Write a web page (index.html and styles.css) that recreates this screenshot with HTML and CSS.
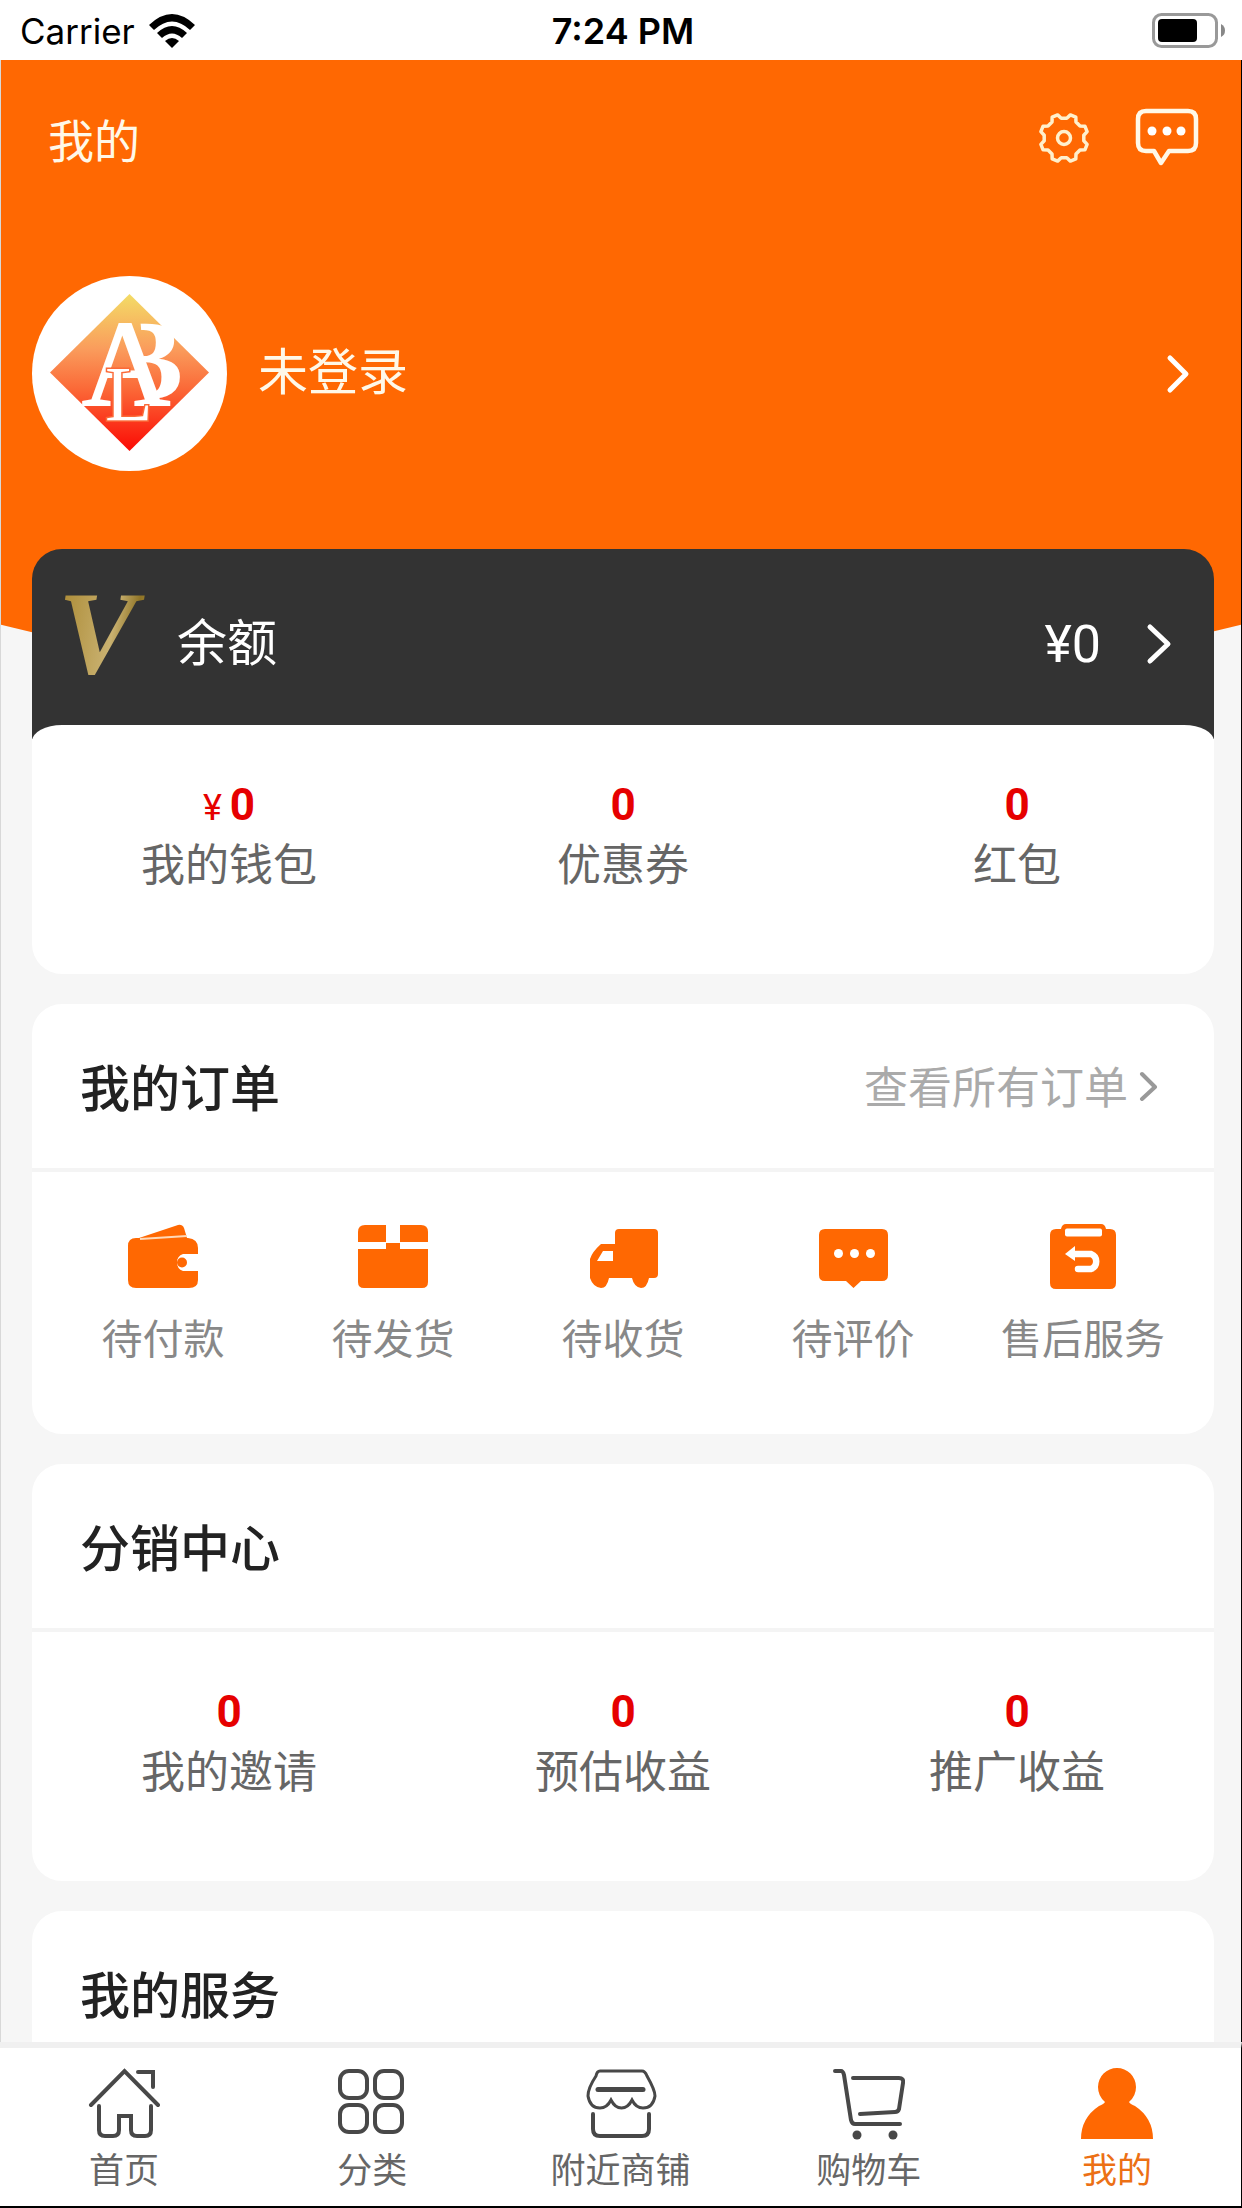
FILE: index.html
```html
<!DOCTYPE html>
<html lang="zh-CN">
<head>
    <meta charset="UTF-8">
    <meta name="viewport" content="width=device-width, initial-scale=1.0">
    <title>我的</title>
    <link rel="stylesheet" href="styles.css">
</head>
<body>
    <div class="status">
        <div class="carrier">
            <span>Carrier</span>
            <svg width="46" height="34" viewBox="0 0 46 34">
                <path d="M0 11Q23-11 46 11L41 16Q23-1 5 16Z"/>
                <path d="M8 19Q23 5 38 19L33 24Q23 15 13 24Z"/>
                <path d="M16 27Q23 21 30 27L23 34Z"/>
            </svg>
        </div>
        <div class="time">7:24 PM</div>
        <div class="battery">
            <svg width="74" height="36" viewBox="0 0 74 36">
                <rect x="1.5" y="1.5" width="63" height="32" rx="8" fill="none" stroke="#999" stroke-width="3"/>
                <rect x="6" y="6" width="39" height="23" rx="4"/>
                <path d="M69 11q4 2 4 6.500t-4 6.500z" fill="#888"/>
            </svg>
        </div>
    </div>

    <main class="page">
        <header class="topbar">
            <h1>我的</h1>
            <button class="icon-btn" aria-label="设置">
                <svg width="64" height="64" viewBox="-32 -32 64 64" fill="none" stroke="#fff0cc" stroke-width="3.500" stroke-linejoin="round">
                    <path d="M19.800 2.800L23.100 6.400L20.900 11.800L16 12L12 16L11.800 20.900L6.400 23.100L2.800 19.800H-2.800L-6.400 23.100L-11.800 20.900L-12 16L-16 12L-20.900 11.800L-23.100 6.400L-19.800 2.800V-2.800L-23.100-6.400L-20.900-11.800L-16-12L-12-16L-11.800-20.900L-6.400-23.100L-2.800-19.800H2.800L6.400-23.100L11.800-20.900L12-16L16-12L20.900-11.800L23.100-6.400L19.800-2.800Z"/>
                    <circle r="6.500"/>
                </svg>
            </button>
            <button class="icon-btn" aria-label="消息">
                <svg width="64" height="64" viewBox="0 0 64 64" fill="none" stroke="#fff8e8" stroke-width="4.500" stroke-linejoin="round">
                    <path d="M11 5H53Q61 5 61 13V37Q61 45 53 45H34L26 57L19 45H11Q3 45 3 37V13Q3 5 11 5Z"/>
                    <g fill="#fff" stroke="none">
                        <circle cx="17" cy="25" r="4.500"/>
                        <circle cx="32" cy="25" r="4.500"/>
                        <circle cx="46" cy="25" r="4.500"/>
                    </g>
                </svg>
            </button>
        </header>

        <a href="#" class="profile">
            <svg class="avatar" width="195" height="195" viewBox="0 0 195 195">
                <defs>
                    <linearGradient id="gem" x1="0" y1="0" x2="0" y2="1">
                        <stop offset="0" stop-color="#f3dc66"/>
                        <stop offset=".35" stop-color="#fa9c5c"/>
                        <stop offset=".6" stop-color="#fb6a38"/>
                        <stop offset="1" stop-color="#fb0a04"/>
                    </linearGradient>
                    <clipPath id="bowls"><path d="M107 30H170V140H117Z"/></clipPath>
                </defs>
                <circle cx="97.500" cy="97.500" r="97.500" fill="#fff"/>
                <path d="M97.500 18L177 96.500L97.500 175L18 96.500Z" fill="url(#gem)"/>
                <text class="mark mark-b" x="75" y="123" font-size="114" clip-path="url(#bowls)">B</text>
                <text class="mark mark-a" x="50" y="129" font-size="122">A</text>
                <text class="mark mark-l" x="73" y="144" font-size="78">L</text>
            </svg>
            <span class="name">未登录</span>
            <svg width="28" height="44" viewBox="0 0 28 44" class="arrow"><path d="M6 6L22 22L6 38"/></svg>
        </a>

        <a href="#" class="balance">
            <span class="vip">V</span>
            <span class="balance-label">余额</span>
            <span class="money">¥0</span>
            <svg width="28" height="44" viewBox="0 0 28 44" class="arrow"><path d="M5 5L23 22L5 39"/></svg>
        </a>

        <section class="card wallet">
            <ul class="stats">
                <li><b><small>¥</small>0</b><span>我的钱包</span></li>
                <li><b>0</b><span>优惠券</span></li>
                <li><b>0</b><span>红包</span></li>
            </ul>
        </section>

        <section class="card">
            <div class="card-head">
                <h2>我的订单</h2>
                <a href="#" class="more">查看所有订单
                    <svg width="22" height="32" viewBox="0 0 22 32" class="arrow"><path d="M4 5L17 18L4 30"/></svg>
                </a>
            </div>
            <nav class="orders">
                <a href="#">
                    <svg viewBox="0 0 72 72">
                        <path d="M12 18L51 5Q55 4 57 8L60 18Z"/>
                        <path d="M9 18H61Q71 19 71 28V34H56A9 9 0 0 0 56 51H71V60Q71 68 62 68H9Q1 68 1 60V26Q1 18 9 18Z"/>
                        <path d="M13 19L60 16" stroke="#ffd9b8" stroke-width="2"/>
                        <circle cx="55" cy="42.500" r="5"/>
                    </svg>
                    待付款
                </a>
                <a href="#">
                    <svg viewBox="0 0 72 72">
                        <path d="M8 5H29V22H1V12Q1 5 8 5Z"/>
                        <path d="M43 5H64Q71 5 71 12V22H43Z"/>
                        <path d="M1 29H29V23H43V29H71V62Q71 68 65 68H7Q1 68 1 62Z"/>
                    </svg>
                    待发货
                </a>
                <a href="#">
                    <svg viewBox="0 0 72 72">
                        <path fill-rule="evenodd" d="M32 9H67Q71 9 71 13V54Q71 58 67 58H62Q60 68 54 68Q47 67 45 58H22Q20 68 14 68Q6 67 3 58V39Q5 32 14 24H28V13Q28 9 32 9ZM16 31L10 41H26V31Z"/>
                    </svg>
                    待收货
                </a>
                <a href="#">
                    <svg viewBox="0 0 72 72">
                        <path d="M8 9H65Q71 9 71 15V55Q71 61 65 61H44L36.500 68L29 61H8Q2 61 2 55V15Q2 9 8 9Z"/>
                        <g fill="#fff">
                            <circle cx="21.500" cy="33.500" r="4.500"/>
                            <circle cx="37.500" cy="33.500" r="4.500"/>
                            <circle cx="53.500" cy="33.500" r="4.500"/>
                        </g>
                    </svg>
                    待评价
                </a>
                <a href="#">
                    <svg viewBox="0 0 72 72">
                        <path d="M9 9H14Q15 4 19 4H54Q58 4 59 9H63Q69 9 69 15V63Q69 69 63 69H9Q3 69 3 63V15Q3 9 9 9Z"/>
                        <rect x="18" y="8.500" width="37" height="8" rx="2" fill="#fff"/>
                        <path d="M27 34H44A8 8 0 0 1 44 49H31" fill="none" stroke="#fff" stroke-width="6.500" stroke-linecap="round"/>
                        <path d="M18 34L28 26V41Z" fill="#fff"/>
                    </svg>
                    售后服务
                </a>
            </nav>
        </section>

        <section class="card">
            <div class="card-head"><h2>分销中心</h2></div>
            <ul class="stats">
                <li><b>0</b><span>我的邀请</span></li>
                <li><b>0</b><span>预估收益</span></li>
                <li><b>0</b><span>推广收益</span></li>
            </ul>
        </section>

        <section class="card">
            <div class="card-head"><h2>我的服务</h2></div>
        </section>
    </main>

    <nav class="tabs">
        <a href="#">
            <svg viewBox="0 0 72 72">
                <path d="M3 37L36.500 3L70 37M50 4H65V19"/>
                <path d="M11 38V62Q11 68 17 68H25Q31 68 31 62V48H43V62Q43 68 49 68H57Q63 68 63 62V38"/>
            </svg>
            首页
        </a>
        <a href="#">
            <svg viewBox="0 0 72 72">
                <rect x="4" y="3" width="27" height="27" rx="9"/>
                <rect x="39" y="3" width="27" height="27" rx="9"/>
                <rect x="4" y="37" width="27" height="27" rx="9"/>
                <rect x="39" y="37" width="27" height="27" rx="9"/>
            </svg>
            分类
        </a>
        <a href="#">
            <svg viewBox="0 0 72 72" class="thin">
                <path d="M15 3H57Q60 3 62 8Q70 22 70 28Q68 40 58 40Q51 40 47 32Q43 40 36.500 40Q30 40 26 32Q22 40 15 40Q5 40 3 28Q3 20 11 8Q12 3 15 3Z"/>
                <path d="M13 21.500H58" stroke-width="5"/>
                <path d="M8 46V61Q8 68 15 68H57Q64 68 64 61V46" stroke-width="4"/>
            </svg>
            附近商铺
        </a>
        <a href="#">
            <svg viewBox="0 0 72 72">
                <path d="M2 3H8Q10 3 11 7L18 52Q19 56 22 56H67"/>
                <path d="M20 10H66Q71 10 70 15L66 41Q65 44 62 44L27 46"/>
                <circle cx="24" cy="67" r="4.500" class="fill"/>
                <circle cx="60" cy="67" r="4.500" class="fill"/>
            </svg>
            购物车
        </a>
        <a href="#" class="on">
            <svg viewBox="0 0 72 72">
                <path d="M36 0A19 19 0 0 1 55 19Q55 28 48 34Q49 36 54 38Q72 50 72 71H0Q0 50 18 38Q23 36 24 34Q17 28 17 19A19 19 0 0 1 36 0Z"/>
            </svg>
            我的
        </a>
    </nav>
</body>
</html>
```
FILE: styles.css
```css
*{
    margin: 0;
    padding: 0;
    box-sizing: border-box;
}
body{
    display: flex;
    flex-direction: column;
    height: 100vh;
    overflow: hidden;
    background-color: #fff;
    font-family: "Noto Sans CJK SC", sans-serif;
    font-size: 44px;
    color: #666;
}
a{
    color: inherit;
    text-decoration: none;
}
ul{
    list-style: none;
}
svg{
    display: block;
    flex: none;
}

/* 状态栏 */
.status{
    display: flex;
    align-items: center;
    height: 60px;
    flex: none;
    padding: 2px 16px 0;
    font-family: Inter, sans-serif;
    font-size: 35px;
    color: #000;
}
.carrier,
.battery{
    display: flex;
    flex: 1;
    align-items: center;
    gap: 14px;
}
.carrier{
    padding-left: 4px;
}
.battery{
    justify-content: flex-end;
}
.time{
    font-size: 36px;
    font-weight: 600;
}

/* 页面 */
.page{
    position: relative;
    isolation: isolate;
    flex: 1;
    min-height: 0;
    overflow: hidden;
    padding: 0 27px 0 31px;
    border-left: 1px solid rgba(0,0,0,.12);
    border-right: 1px solid #000;
    background-color: #f6f6f6;
}
/* 橙色弧形背景 */
.page::before{
    content: "";
    position: absolute;
    z-index: -1;
    left: -100%;
    top: -1994px;
    width: 300%;
    height: 2634px;
    border-radius: 50%;
    background-color: #ff6802;
}
.topbar{
    display: flex;
    align-items: center;
    gap: 39px;
    height: 156px;
    padding: 0 15px 0 16px;
}
.topbar h1{
    flex: 1;
    font-size: 46px;
    font-weight: 400;
    color: #fff8e8;
}
.icon-btn{
    border: 0;
    background: none;
}
.profile{
    display: flex;
    align-items: center;
    padding: 60px 22px 78px 0;
}
.name{
    flex: 1;
    padding: 0 0 12px 31px;
    font-size: 50px;
    line-height: 60px;
    color: #fff8e8;
}
.arrow{
    fill: none;
    stroke: #fff;
    stroke-width: 5;
    stroke-linecap: round;
    stroke-linejoin: round;
}
.mark{
    font-family: "Liberation Serif", serif;
    fill: #fff;
    stroke: #fff;
}
.mark-a{
    stroke-width: 2;
}
.mark-b{
    font-weight: bold;
    stroke: none;
}
.mark-l{
    stroke: #fb6a38;
    stroke-width: 3;
    paint-order: stroke;
}

/* 余额 */
.balance{
    display: flex;
    align-items: center;
    height: 190px;
    padding: 0 41px 0 26px;
    border-radius: 30px 30px 0 0;
    background-color: #333;
    font-size: 50px;
    color: #fff;
}
.vip{
    width: 119px;
    padding-bottom: 20px;
    font: italic bold 118px/150px "Liberation Serif", serif;
    background-image: linear-gradient(100deg, #a8862e, #c9b170 45%, #8f7426 60%, #d9c06a);
    -webkit-background-clip: text;
    background-clip: text;
    color: transparent;
}
.balance-label{
    flex: 1;
    padding-bottom: 10px;
}
.money{
    padding-right: 44px;
    font-family: Roboto, sans-serif;
    font-size: 52px;
}

/* 卡片 */
.card{
    margin-bottom: 30px;
    border-radius: 30px;
    background-color: #fff;
}
.wallet{
    margin-top: -14px;
    border-radius: 30px 30px 30px 30px / 16px 16px 30px 30px;
}
.stats{
    display: flex;
    padding: 52px 0 83px;
}
.stats li{
    display: flex;
    flex: 1;
    flex-direction: column;
    text-align: center;
}
.stats b{
    font-family: Roboto, sans-serif;
    line-height: 56px;
    color: #e60000;
}
.stats small{
    padding-right: 8px;
    font-size: 36px;
    font-weight: 400;
    line-height: 1;
}
.stats span{
    line-height: 58px;
}
.card-head{
    display: flex;
    align-items: center;
    justify-content: space-between;
    padding: 51px 54px 53px 48px;
    border-bottom: 4px solid #f4f4f4;
    line-height: 60px;
}
.card-head h2{
    font-size: 50px;
    font-weight: 500;
    color: #222;
}
.more{
    display: flex;
    align-items: center;
    gap: 10px;
    color: #aaa;
}
.more .arrow{
    stroke: #999;
    stroke-width: 4;
}
.orders{
    display: flex;
    padding: 48px 16px 68px;
}
.orders a,
.tabs a{
    display: flex;
    flex: 1;
    flex-direction: column;
    align-items: center;
}
.orders a{
    gap: 14px;
    font-size: 41px;
    line-height: 60px;
    color: #888;
}
.orders svg,
.tabs svg{
    width: 72px;
    height: 72px;
}
.orders svg{
    fill: #ff6802;
}

/* 底部导航 */
.tabs{
    display: flex;
    flex: none;
    padding: 20px 0 16px;
    border-top: 6px solid #f0f0f0;
    border-right: 1px solid #000;
    border-bottom: 2px solid #000;
    background-color: #fff;
    font-size: 35px;
    line-height: 44px;
}
.tabs a{
    gap: 6px;
}
.tabs svg{
    fill: none;
    stroke: #484848;
    stroke-width: 4;
    stroke-linecap: round;
}
.tabs .thin{
    stroke-width: 3;
}
.tabs .fill{
    fill: #484848;
    stroke: none;
}
.tabs .on{
    color: #ec7015;
}
.tabs .on svg{
    fill: #ff6802;
    stroke: none;
}
```
